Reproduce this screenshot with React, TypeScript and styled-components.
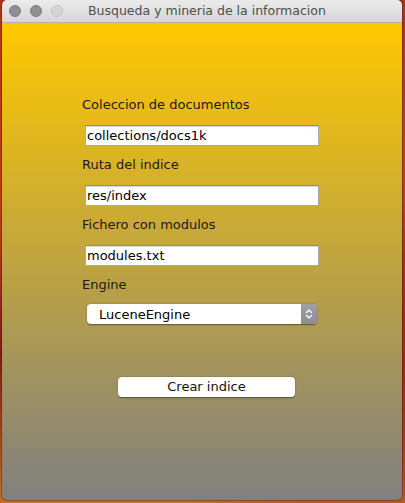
import React from "react";
import styled, { createGlobalStyle } from "styled-components";

const Global = createGlobalStyle`
  html, body { margin: 0; padding: 0; }
  body {
    width: 405px;
    height: 503px;
    overflow: hidden;
    background:
      radial-gradient(circle at 10% 20%, #b8341c 0%, transparent 40%),
      radial-gradient(circle at 90% 70%, #a8281a 0%, transparent 45%),
      linear-gradient(180deg, #a8341c 0%, #b84c1e 40%, #7c2014 70%, #c07028 100%);
    font-family: "DejaVu Sans", "Liberation Sans", sans-serif;
  }
`;

const Window = styled.div`
  margin: 0 3px 0 2px;
  width: 400px;
  height: 500px;
  border-radius: 5px;
  overflow: hidden;
  display: flex;
  flex-direction: column;
  box-shadow: 0 0 0 1px rgba(60, 20, 10, 0.35);
`;

const TitleBar = styled.div`
  height: 22px;
  flex: none;
  display: flex;
  align-items: center;
  position: relative;
  background: linear-gradient(180deg, #ebebeb 0%, #d6d6d6 100%);
  border-bottom: 1px solid #b3b3b3;
`;

const Lights = styled.div`
  display: flex;
  gap: 9px;
  padding-left: 7px;
`;

const Light = styled.span<{ $off?: boolean }>`
  width: 12px;
  height: 12px;
  border-radius: 50%;
  box-sizing: border-box;
  background: ${(p) => (p.$off ? "#d4d4d4" : "#8e8e93")};
  border: 1px solid ${(p) => (p.$off ? "#c2c2c2" : "#7c7c80")};
`;

const Title = styled.div`
  position: absolute;
  left: 86px;
  top: 0;
  height: 22px;
  line-height: 22px;
  font-size: 12.5px;
  color: #4d4d4d;
`;

const Content = styled.div`
  flex: 1;
  background: linear-gradient(180deg, #ffc800 0%, #808080 100%);
  padding: 74px 0 0 80px;
  display: flex;
  flex-direction: column;
`;

const Label = styled.div<{ $top?: number }>`
  font-size: 13px;
  line-height: 16px;
  color: #1a1a1a;
  margin-top: ${(p) => p.$top ?? 0}px;
`;

const Field = styled.div`
  margin: 12px 0 0 3px;
  width: 234px;
  height: 21px;
  box-sizing: border-box;
  background: #fff;
  border: 1px solid #a8a8a8;
  border-top-color: #8e8e8e;
  box-shadow: inset 0 1px 0 #d8d8d8;
  font-size: 13px;
  line-height: 19px;
  padding-left: 1px;
  color: #000;
`;

const Popup = styled.div`
  margin: 11px 0 0 5px;
  width: 230px;
  height: 20px;
  box-sizing: border-box;
  background: #fff;
  border-radius: 4px;
  box-shadow: 0 0.5px 1.5px rgba(0, 0, 0, 0.45);
  display: flex;
  align-items: center;
  overflow: hidden;
`;

const PopupText = styled.span`
  flex: 1;
  padding-left: 12px;
  font-size: 13px;
  color: #000;
`;

const Stepper = styled.div`
  width: 16px;
  height: 100%;
  background: linear-gradient(180deg, #a0a0a6 0%, #8c8c92 100%);
  display: flex;
  align-items: center;
  justify-content: center;
`;

const Button = styled.div`
  margin: 53px 0 0 36px;
  width: 177px;
  height: 20px;
  box-sizing: border-box;
  background: #fff;
  border-radius: 4px;
  box-shadow: 0 0.5px 1.5px rgba(0, 0, 0, 0.45);
  font-size: 13px;
  line-height: 20px;
  text-align: center;
  color: #111;
`;

export default function App() {
  return (
    <>
      <Global />
      <Window>
        <TitleBar>
          <Lights>
            <Light />
            <Light />
            <Light $off />
          </Lights>
          <Title>Busqueda y mineria de la informacion</Title>
        </TitleBar>
        <Content>
          <Label>Coleccion de documentos</Label>
          <Field>collections/docs1k</Field>
          <Label $top={11}>Ruta del indice</Label>
          <Field>res/index</Field>
          <Label $top={11}>Fichero con modulos</Label>
          <Field>modules.txt</Field>
          <Label $top={11}>Engine</Label>
          <Popup>
            <PopupText>LuceneEngine</PopupText>
            <Stepper>
              <svg width="8" height="12" viewBox="0 0 8 12" fill="none" stroke="#fff" strokeWidth="1.3" strokeLinecap="round" strokeLinejoin="round">
                <path d="M1.5 4.5 L4 2 L6.5 4.5" />
                <path d="M1.5 7.5 L4 10 L6.5 7.5" />
              </svg>
            </Stepper>
          </Popup>
          <Button>Crear indice</Button>
        </Content>
      </Window>
    </>
  );
}
